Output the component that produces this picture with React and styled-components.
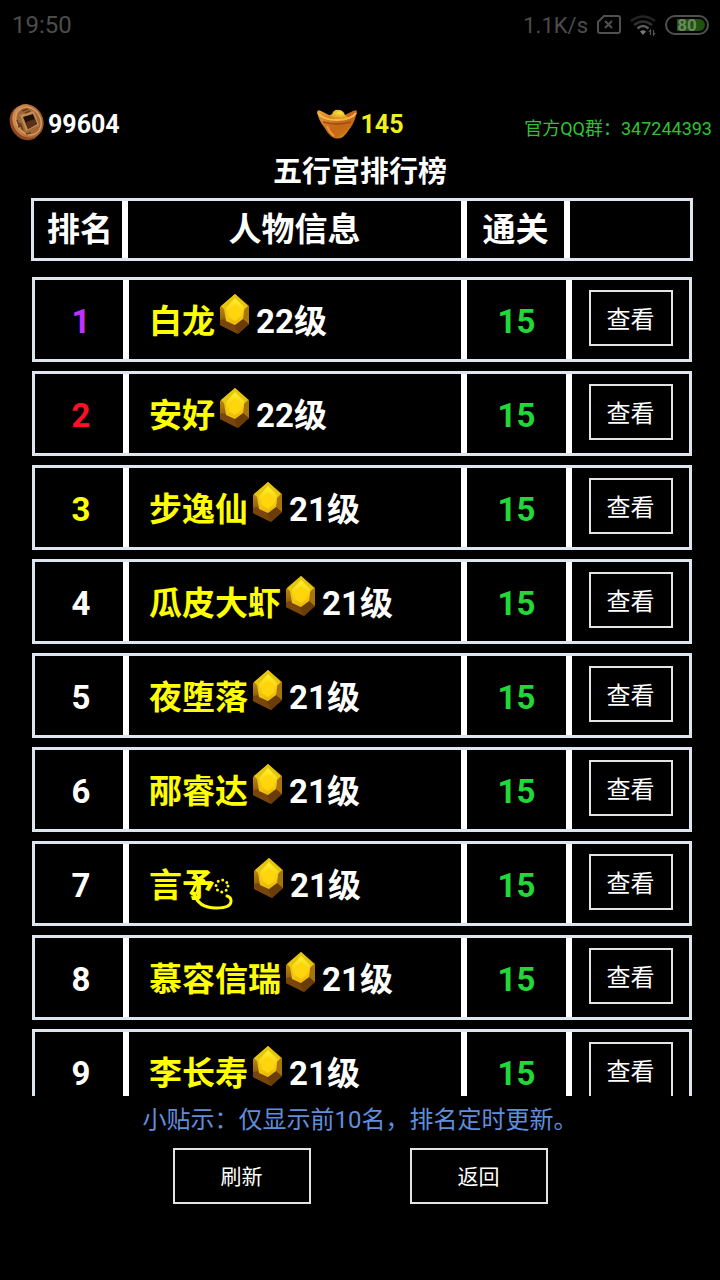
import React from "react";
import styled, { createGlobalStyle } from "styled-components";

const GlobalStyle = createGlobalStyle`
  *, *::before, *::after { box-sizing: border-box; }
  html, body { margin: 0; background: #000; }
  body {
    color: #fff;
    font-family: Roboto, "Noto Sans CJK SC", sans-serif;
  }
`;

const Page = styled.div`
  display: flex;
  flex-direction: column;
  min-height: 100vh;
  background: #000;
`;

const StatusBar = styled.header`
  display: flex;
  align-items: center;
  justify-content: space-between;
  height: 50px;
  padding: 0 11px 0 12px;
  color: #4c4c4c;
  font-size: 24px;
`;

const StatusIcons = styled.div`
  display: flex;
  align-items: center;
  gap: 9px;
  font-size: 22px;
`;

const Wallet = styled.section`
  display: grid;
  grid-template-columns: 1fr auto 1fr;
  align-items: center;
  height: 42px;
  margin-top: 53px;
  padding: 0 8px;
`;

const Amount = styled.div`
  display: flex;
  align-items: center;
  gap: 2px;
  color: ${(p) => p.$color};
  font-size: 25px;
  font-weight: 700;
  line-height: 42px;
`;

const Group = styled.p`
  margin: 4px 0 0;
  color: #2bc435;
  font-size: 18px;
  text-align: right;
  white-space: nowrap;
`;

const Title = styled.h1`
  margin: 8px 0 7px;
  font-size: 29px;
  font-weight: 700;
  line-height: 38px;
  text-align: center;
`;

const Board = styled.table`
  display: flex;
  flex-direction: column;
  gap: 16px;
  font-size: 33px;
  font-weight: 700;
  line-height: 38px;
`;

const BoardHead = styled.thead`
  display: block;
  margin: 0 27px 0 31px;
`;

const BoardBody = styled.tbody`
  display: flex;
  flex-direction: column;
  gap: 9px;
  height: 819px;
  margin: 0 28px 0 32px;
  overflow: hidden;
`;

const HeadRow = styled.tr`
  display: grid;
  grid-template-columns: 94fr 339fr 103fr 120fr;
  height: 63px;
  border: 3px solid #dde6ef;
`;

const Row = styled.tr`
  display: grid;
  flex: none;
  grid-template-columns: 94fr 338fr 105fr 117fr;
  height: 85px;
  border: 3px solid #dde6ef;
`;

const HeadCell = styled.th`
  display: flex;
  align-items: center;
  justify-content: center;
  min-width: 0;
  padding: 0;
  border-right: 6px solid #fff;

  &:first-child { padding-left: 4px; }
  &:last-child { border-right: 0; }
`;

const Cell = styled.td`
  display: flex;
  align-items: center;
  min-width: 0;
  border-right: 6px solid #fff;
  white-space: nowrap;
`;

const NumberCell = styled(Cell)`
  justify-content: center;
  padding: 5px 0 0;
  color: ${(p) => p.$color || "#fff"};

  &:first-child { padding-left: 4px; }
`;

const PlayerCell = styled(Cell)`
  padding: 4px 0 0 20px;
`;

const ActionCell = styled(Cell)`
  justify-content: center;
  padding: 0 0 3px;
  border-right: 0;
`;

const Name = styled.span`
  color: #ff0;
`;

const Gem = styled.svg`
  flex: none;
  width: 32px;
  height: 42px;
  margin: 0 6px 16px 3px;
`;

const Coin = styled.svg`
  width: 38px;
  height: 38px;
  margin-bottom: 6px;
`;

const Flourish = styled.svg`
  flex: none;
  width: 60px;
  height: 40px;
  margin: 10px 0 0 -26px;
`;

const Button = styled.button`
  width: ${(p) => (p.$wide ? "138px" : "84px")};
  height: 56px;
  padding: 0 0 2px;
  border: 2px solid #e4e4e4;
  background: #000;
  color: #fff;
  font-family: inherit;
  font-size: ${(p) => (p.$wide ? "21px" : "24px")};
`;

const Tip = styled.p`
  margin: 6px 0 0;
  color: #5f8edc;
  font-size: 24px;
  line-height: 36px;
  text-align: center;
`;

const Actions = styled.footer`
  display: flex;
  justify-content: center;
  gap: 99px;
  padding-top: 10px;
`;

const BatteryFrame = styled.span`
  display: flex;
  align-items: center;
  justify-content: center;
  width: 44px;
  height: 20px;
  padding: 2px;
  border: 2px solid #505050;
  border-radius: 10px;
  background: linear-gradient(90deg, #000 8px, #1f5210 8px) content-box;
  color: #6b8a60;
  font-size: 17px;
  font-weight: 700;
  line-height: 1;
`;

const players = [
  { name: "白龙", level: 22, color: "#c030ff" },
  { name: "安好", level: 22, color: "#f81228" },
  { name: "步逸仙", level: 21, color: "#ff0" },
  { name: "瓜皮大虾", level: 21 },
  { name: "夜堕落", level: 21 },
  { name: "邴睿达", level: 21 },
  { name: "言予", level: 21, flourish: true },
  { name: "慕容信瑞", level: 21 },
  { name: "李长寿", level: 21 },
];

function SimIcon() {
  return (
    <svg width="24" height="20" viewBox="0 0 24 20" fill="none" stroke="#505050" strokeWidth="2" aria-hidden="true">
      <path d="M7 1h14q2 0 2 2v13q0 2-2 2H3q-2 0-2-2V7z" />
      <path d="M8 6l7 7M15 6l-7 7" />
    </svg>
  );
}

function WifiIcon() {
  return (
    <svg width="26" height="22" viewBox="0 0 26 22" fill="none" strokeWidth="2.6" aria-hidden="true">
      <path d="M1 7Q13-2 25 7" stroke="#242424" />
      <path d="M4 11Q13 4 22 11" stroke="#303030" />
      <path d="M7.500 14.500Q13 9.500 18.500 14.500" stroke="#5c5c5c" />
      <path d="M10 17.500q3-2.500 6 0L13 21z" fill="#777" />
      <path d="M20.500 21v-5l-1.500 2M23.500 16v5l1.500-2" stroke="#555" strokeWidth="1.200" />
    </svg>
  );
}

function CoinIcon() {
  return (
    <Coin viewBox="0 0 38 38" aria-hidden="true">
      <defs>
        <linearGradient id="coin" x1="0" y1="0" x2="1" y2="1">
          <stop offset="0" stopColor="#d99a5c" />
          <stop offset="0.500" stopColor="#b9733a" />
          <stop offset="1" stopColor="#8a4a1c" />
        </linearGradient>
      </defs>
      <ellipse cx="17.500" cy="20" rx="15" ry="18" fill="#8f4820" transform="rotate(-32 17.500 20)" />
      <ellipse cx="20" cy="18" rx="15" ry="17.500" fill="url(#coin)" transform="rotate(-32 20 18)" />
      <ellipse cx="20.500" cy="18" rx="12" ry="14.500" fill="#a06838" stroke="#d79b5e" strokeWidth="1.500" transform="rotate(-32 20.500 18)" />
      <path d="M12 12l14-4 5 14-13 6z" fill="#c18a54" />
      <path d="M15 14l10-3 4 10-9 5z" fill="#1f0f08" />
      <path d="M18 19l9-3 2 5-9 5z" fill="#5a301a" />
      <path d="M14 8l6-2M17 10l5-2M9 17l3 7M12 20l3 7M18 31l5-1M10 24l4-2" stroke="#6a3b1b" strokeWidth="1.500" />
    </Coin>
  );
}

function IngotIcon() {
  return (
    <svg width="42" height="32" viewBox="0 0 42 32" aria-hidden="true">
      <defs>
        <linearGradient id="ingot" x1="0" y1="0" x2="1" y2="1">
          <stop offset="0" stopColor="#f2a53a" />
          <stop offset="0.500" stopColor="#c4681a" />
          <stop offset="0.700" stopColor="#c96c14" />
          <stop offset="1" stopColor="#e8c228" />
        </linearGradient>
        <radialGradient id="ingotTop" cx="0.600" cy="0.300" r="0.700">
          <stop offset="0" stopColor="#ffe83a" />
          <stop offset="1" stopColor="#cf7a16" />
        </radialGradient>
      </defs>
      <path d="M1 3q1-3 4-1l8 4h16l8-4q4-2 4 1-2 9-6 15-4 6-8 10-6 3-11 0-5-4-8-10Q3 12 1 3z" fill="url(#ingot)" />
      <path d="M11 9q2-3 5-4 2-5 7-4 4 0 6 5l4 3q-11 5-22 0z" fill="url(#ingotTop)" />
      <path d="M2 4q5 7 19 7Q35 11 40 4" fill="none" stroke="#f5b850" strokeWidth="2" />
      <path d="M7 13q14 4 28 0" fill="none" stroke="#a24e0d" strokeWidth="1.500" />
      <path d="M11 17q3 7 7 10" fill="none" stroke="#e8973e" strokeWidth="2" />
    </svg>
  );
}

function GemIcon() {
  return (
    <Gem viewBox="0 0 32 42" aria-hidden="true">
      <defs>
        <linearGradient id="gemSide" x1="0" y1="0" x2="0" y2="1">
          <stop offset="0" stopColor="#d9a808" />
          <stop offset="0.500" stopColor="#a8700c" />
          <stop offset="1" stopColor="#5e360a" />
        </linearGradient>
        <linearGradient id="gemFace" x1="0" y1="0" x2="0" y2="1">
          <stop offset="0" stopColor="#fff22a" />
          <stop offset="1" stopColor="#f0b408" />
        </linearGradient>
      </defs>
      <path d="M17 1L31 13v18L20 41 2 32V14z" fill="url(#gemSide)" />
      <path d="M2 27l7-1 7 6 4 9L2 32z" fill="#7a450c" />
      <path d="M16 32l8-7 7 6-11 10z" fill="#6a3c0a" />
      <path d="M25 16l6-3v18l-7-6z" fill="#a8740e" />
      <path d="M17 1l13 12-4 4-1 9-8 6-9-4-2-12-3-3z" fill="#e6c60c" />
      <path d="M17 5l9 9-1 11-8 6-8-5-1-11z" fill="url(#gemFace)" />
      <path d="M17 11l6 5v7l-6 5-6-4v-8z" fill="#ffd50c" />
    </Gem>
  );
}

function NameFlourish() {
  return (
    <Flourish viewBox="0 0 60 40" fill="none" stroke="#ff0" strokeLinecap="round" role="img" aria-label="ꦿ">
      <circle cx="33" cy="15" r="6" strokeWidth="3" strokeDasharray="0 4.712" />
      <path d="M5 3Q9 5 8 10Q5 18 2 22Q6 26 9 19V10" strokeWidth="2.600" />
      <path d="M5 22Q9 37 27 37Q42 37 42 30Q42 26 38 25" strokeWidth="3" />
    </Flourish>
  );
}

export default function App() {
  return (
    <>
      <GlobalStyle />
      <Page>
        <StatusBar>
          <span>19:50</span>
          <StatusIcons>
            <span>1.1K/s</span>
            <SimIcon />
            <WifiIcon />
            <BatteryFrame>80</BatteryFrame>
          </StatusIcons>
        </StatusBar>
        <Wallet>
          <Amount $color="#fff"><CoinIcon />99604</Amount>
          <Amount $color="#f0f020"><IngotIcon />145</Amount>
          <Group>官方QQ群：347244393</Group>
        </Wallet>
        <main>
          <Title>五行宫排行榜</Title>
          <Board>
            <BoardHead>
              <HeadRow>
                <HeadCell scope="col">排名</HeadCell>
                <HeadCell scope="col">人物信息</HeadCell>
                <HeadCell scope="col">通关</HeadCell>
                <HeadCell scope="col" />
              </HeadRow>
            </BoardHead>
            <BoardBody>
              {players.map((player, i) => (
                <Row key={player.name}>
                  <NumberCell $color={player.color}>{i + 1}</NumberCell>
                  <PlayerCell>
                    <Name>{player.name}</Name>
                    {player.flourish && <NameFlourish />}
                    <GemIcon />
                    <span>{player.level}级</span>
                  </PlayerCell>
                  <NumberCell $color="#22d838">15</NumberCell>
                  <ActionCell><Button type="button">查看</Button></ActionCell>
                </Row>
              ))}
            </BoardBody>
          </Board>
          <Tip>小贴示：仅显示前10名，排名定时更新。</Tip>
        </main>
        <Actions>
          <Button $wide type="button">刷新</Button>
          <Button $wide type="button">返回</Button>
        </Actions>
      </Page>
    </>
  );
}
